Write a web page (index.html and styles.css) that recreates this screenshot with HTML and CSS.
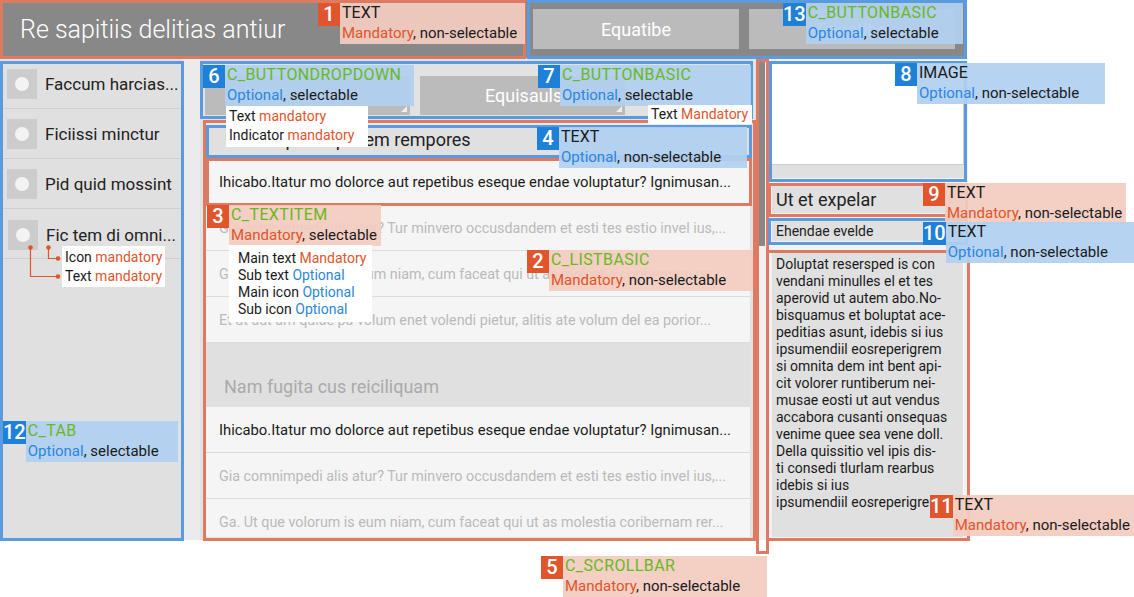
FILE: index.html
```html
<!DOCTYPE html>
<html>
<head>
<meta charset="utf-8">
<link rel="stylesheet" href="styles.css">
</head>
<body>
<div class="screen">
  <header class="hdr">
    <div class="title">Re sapitiis delitias antiur</div>
    <div class="hbtns"><div class="hbtn">Equatibe</div><div class="hbtn">Equatibe</div></div>
  </header>
  <div class="main">
    <nav class="tabs">
      <div class="tab"><span class="ticon"></span><span class="tlabel">Faccum harcias...</span></div>
      <div class="tab"><span class="ticon"></span><span class="tlabel">Ficiissi minctur</span></div>
      <div class="tab"><span class="ticon"></span><span class="tlabel">Pid quid mossint</span></div>
      <div class="tab shifted"><span class="ticon"></span><span class="tlabel">Fic tem di omni...</span></div>
    </nav>
    <div class="gap"></div>
    <section class="center">
      <div class="toolbar">
        <div class="dbtn"></div>
        <div class="dbtn">Equisauls</div>
      </div>
      <div class="list">
        <div class="lhead">Ut et expelar quidem rempores</div>
        <div class="row dark">Ihicabo.Itatur mo dolorce aut repetibus eseque endae voluptatur? Ignimusan...</div>
        <div class="row">Gia comnimpedi alis atur? Tur minvero occusdandem et esti tes estio invel ius,...</div>
        <div class="row">Ga. Ut que volorum is eum niam, cum faceat qui ut as molestia coribernam rer...</div>
        <div class="row">Et ut aut am quiae pa volum enet volendi pietur, alitis ate volum del ea porior...</div>
        <div class="group">Nam fugita cus reiciliquam</div>
        <div class="row dark">Ihicabo.Itatur mo dolorce aut repetibus eseque endae voluptatur? Ignimusan...</div>
        <div class="row">Gia comnimpedi alis atur? Tur minvero occusdandem et esti tes estio invel ius,...</div>
        <div class="row">Ga. Ut que volorum is eum niam, cum faceat qui ut as molestia coribernam rer...</div>
      </div>
    </section>
    <div class="scroll"><div class="thumb"></div></div>
    <aside class="side">
      <div class="img"><div class="pic"></div></div>
      <div class="t9">Ut et expelar</div>
      <div class="t10">Ehendae evelde</div>
      <div class="t11">Doluptat resersped is con<br>vendani minulles el et tes<br>aperovid ut autem abo.No-<br>bisquamus et boluptat ace-<br>peditias asunt, idebis si ius<br>ipsumendiil eosreperigrem<br>si omnita dem int bent api-<br>cit volorer runtiberum nei-<br>musae eosti ut aut vendus<br>accabora cusanti onsequas<br>venime quee sea vene doll.<br>Della quissitio vel ipis dis-<br>ti consedi tlurlam rearbus<br>idebis si ius<br>ipsumendiil eosreperigrem</div>
    </aside>
  </div>

  <!-- outline overlays -->
  <div class="ol orange o1"></div>
  <div class="ol blue o13"></div>
  <div class="ol blue o12"></div>
  <div class="ol blue o6"></div>
  <div class="ol orange o2"></div>
  <div class="ol blue o4"></div>
  <div class="ol orange o3"></div>
  <div class="ol orange o5"></div>
  <div class="ol blue o8"></div>
  <div class="ol orange o9"></div>
  <div class="ol blue o10"></div>
  <div class="ol orange o11"></div>

  <!-- annotation labels -->
  <div class="ann org a1"><div class="num">1</div><div class="lbl"><div class="nm">TEXT</div><div><span class="mand">Mandatory</span>, non-selectable</div></div></div>
  <div class="ann blu a13"><div class="num">13</div><div class="lbl"><div class="cn">C_BUTTONBASIC</div><div><span class="opt">Optional</span>, selectable</div></div></div>
  <div class="ann blu a6"><div class="num">6</div><div class="lbl"><div class="cn">C_BUTTONDROPDOWN</div><div><span class="opt">Optional</span>, selectable</div></div></div>
  <div class="note n6">Text <span class="mand">mandatory</span><br>Indicator <span class="mand">mandatory</span></div>
  <div class="ann blu a7"><div class="num">7</div><div class="lbl"><div class="cn">C_BUTTONBASIC</div><div><span class="opt">Optional</span>, selectable</div></div></div>
  <div class="note n7">Text <span class="mand">Mandatory</span></div>
  <div class="ann blu a4"><div class="num">4</div><div class="lbl"><div class="nm">TEXT</div><div><span class="opt">Optional</span>, non-selectable</div></div></div>
  <div class="ann org a3"><div class="num">3</div><div class="lbl"><div class="cn">C_TEXTITEM</div><div><span class="mand">Mandatory</span>, selectable</div></div></div>
  <div class="note n3">Main text <span class="mand">Mandatory</span><br>Sub text <span class="opt">Optional</span><br>Main icon <span class="opt">Optional</span><br>Sub icon <span class="opt">Optional</span></div>
  <div class="ann org a2"><div class="num">2</div><div class="lbl"><div class="cn">C_LISTBASIC</div><div><span class="mand">Mandatory</span>, non-selectable</div></div></div>
  <div class="ann org a5"><div class="num">5</div><div class="lbl"><div class="cn">C_SCROLLBAR</div><div><span class="mand">Mandatory</span>, non-selectable</div></div></div>
  <div class="ann blu a8"><div class="num">8</div><div class="lbl"><div class="nm">IMAGE</div><div><span class="opt">Optional</span>, non-selectable</div></div></div>
  <div class="ann org a9"><div class="num">9</div><div class="lbl"><div class="nm">TEXT</div><div><span class="mand">Mandatory</span>, non-selectable</div></div></div>
  <div class="ann blu a10"><div class="num">10</div><div class="lbl"><div class="nm">TEXT</div><div><span class="opt">Optional</span>, non-selectable</div></div></div>
  <div class="ann org a11"><div class="num">11</div><div class="lbl"><div class="nm">TEXT</div><div><span class="mand">Mandatory</span>, non-selectable</div></div></div>
  <div class="ann blu a12"><div class="num">12</div><div class="lbl"><div class="cn">C_TAB</div><div><span class="opt">Optional</span>, selectable</div></div></div>

  <svg class="conn" width="70" height="60" viewBox="0 0 70 60">
    <path d="M30.5 2 V31.5 H58" fill="none" stroke="#e0552b" stroke-width="1.2"/>
    <path d="M48.5 2 V13.5 H58" fill="none" stroke="#e0552b" stroke-width="1.2"/>
    <circle cx="30.5" cy="2.5" r="2.3" fill="#e0552b"/>
    <circle cx="48.5" cy="2.5" r="2.3" fill="#e0552b"/>
    <circle cx="58" cy="13.5" r="2.3" fill="#e0552b"/>
    <circle cx="58" cy="31.5" r="2.3" fill="#e0552b"/>
  </svg>
  <div class="note ntab">Icon <span class="mand">mandatory</span><br>Text <span class="mand">mandatory</span></div>
</div>
</body>
</html>
```

FILE: styles.css
```css
body {
  margin: 0;
  background: #fff;
  font-family: Roboto, "Noto Sans", sans-serif;
}
.screen {
  position: relative;
  width: 1134px;
  height: 597px;
  overflow: hidden;
  background: #fff;
}

/* header */
.hdr {
  display: flex;
  align-items: center;
  width: 966px;
  height: 58px;
  background: #888;
}
.title {
  flex: 1;
  padding-left: 20px;
  color: #fff;
  font-size: 25px;
  font-weight: 300;
}
.hbtns {
  display: flex;
  gap: 10px;
  padding-right: 11px;
}
.hbtn {
  width: 206px;
  height: 40px;
  background: #bbb;
  color: #fff;
  font-size: 18px;
  display: flex;
  align-items: center;
  justify-content: center;
}

/* main */
.main {
  display: flex;
  height: 482px;
}
.tabs {
  width: 183px;
  background: #e0e0e0;
  padding-top: 1px;
  box-sizing: border-box;
}
.tab {
  height: 49px;
  border-bottom: 1px solid #cfcfcf;
  display: flex;
  align-items: center;
  padding-left: 7px;
  gap: 8px;
}
.tab.shifted {
  padding-left: 8px;
  padding-top: 2px;
  height: 47px;
}
.ticon {
  width: 30px;
  height: 30px;
  background: #ccc;
  display: flex;
  align-items: center;
  justify-content: center;
}
.ticon::after {
  content: "";
  width: 14px;
  height: 14px;
  border-radius: 50%;
  background: #f3f3f3;
}
.tlabel {
  font-size: 17px;
  color: #222;
  white-space: nowrap;
}
.gap {
  width: 17px;
  background: #ebebeb;
}
.center {
  width: 556px;
  background: #e2e2e2;
  display: flex;
  flex-direction: column;
}
.toolbar {
  height: 65px;
  display: flex;
  gap: 10px;
  padding: 18px 0 0 5px;
  box-sizing: border-box;
}
.dbtn {
  position: relative;
  width: 205px;
  height: 39px;
  background: #bbb;
  color: #fff;
  font-size: 18px;
  display: flex;
  align-items: center;
  padding-left: 65px;
  box-sizing: border-box;
}
.dbtn::after {
  content: "";
  position: absolute;
  right: 3px;
  bottom: 3px;
  border-left: 6px solid transparent;
  border-bottom: 6px solid #eee;
}
.list {
  margin: 0 6px 3px;
  flex: 1;
  overflow: hidden;
  background: #eaeaea;
  padding-top: 3px;
}
.lhead {
  height: 31px;
  background: #e0e0e0;
  font-size: 18px;
  color: #222;
  padding: 0 0 4px 19px;
  box-sizing: border-box;
  display: flex;
  align-items: center;
  margin-bottom: 2px;
}
.row {
  height: 45px;
  border-bottom: 1px solid #dcdcdc;
  background: #f5f5f5;
  font-size: 14.3px;
  color: #bababa;
  padding-left: 13px;
  display: flex;
  align-items: center;
  white-space: nowrap;
}
.row.dark {
  color: #1a1a1a;
  font-size: 14.8px;
}
.group {
  height: 64px;
  background: #e0e0e0;
  font-size: 18px;
  color: #aaa;
  padding: 0 0 10px 18px;
  box-sizing: border-box;
  display: flex;
  align-items: flex-end;
}
.scroll {
  width: 12px;
  background: #f0f0f0;
  padding-left: 3px;
  box-sizing: border-box;
}
.thumb {
  width: 6px;
  height: 187px;
  margin-top: 1px;
  background: #888;
}
.side {
  width: 200px;
  padding: 3px 4px 0;
  box-sizing: border-box;
  display: flex;
  flex-direction: column;
  background: #f2f2f2;
}
.img {
  height: 117px;
  background: #e0e0e0;
  flex-shrink: 0;
}
.pic {
  height: 103px;
  background: #fff;
  border-right: 1px solid #ccc;
  border-bottom: 1px solid #ccc;
}
.t9 {
  margin-top: 8px;
  height: 27px;
  background: #e0e0e0;
  font-size: 18px;
  color: #222;
  padding-left: 4px;
  display: flex;
  align-items: center;
  flex-shrink: 0;
}
.t10 {
  margin-top: 8px;
  height: 20px;
  background: #e0e0e0;
  font-size: 14px;
  color: #222;
  padding-left: 4px;
  display: flex;
  align-items: center;
  flex-shrink: 0;
}
.t11 {
  margin-top: 12px;
  height: 284px;
  background: #e0e0e0;
  font-size: 14px;
  line-height: 17px;
  color: #1a1a1a;
  padding: 3px 4px;
  box-sizing: border-box;
  border-right: 1px solid #fff;
  white-space: nowrap;
  overflow: hidden;
}

/* outline overlays */
.ol {
  position: absolute;
  box-sizing: border-box;
  border: 3px solid;
}
.orange { border-color: #de7a62; }
.blue { border-color: #5a9be0; }
.o1 { left: 0; top: 0; width: 526px; height: 59px; }
.o13 { left: 527px; top: 0; width: 440px; height: 59px; }
.o12 { left: 0; top: 61px; width: 184px; height: 480px; }
.o6 { left: 200px; top: 61px; width: 553px; height: 58px; }
.o2 { left: 203px; top: 120px; width: 553px; height: 421px; }
.o4 { left: 206px; top: 125px; width: 546px; height: 33px; }
.o3 { left: 206px; top: 158px; width: 546px; height: 48px; }
.o5 { left: 756px; top: 59px; width: 13px; height: 495px; }
.o8 { left: 769px; top: 61px; width: 198px; height: 121px; }
.o9 { left: 768px; top: 183px; width: 200px; height: 34px; }
.o10 { left: 768px; top: 218px; width: 200px; height: 27px; }
.o11 { left: 766px; top: 250px; width: 204px; height: 291px; }

/* annotation labels */
.ann {
  position: absolute;
  display: flex;
  align-items: flex-start;
  font-size: 15px;
  line-height: 20px;
  color: #1a1a1a;
}
.num {
  min-width: 22px;
  height: 23px;
  color: #fff;
  font-size: 20px;
  line-height: 23px;
  text-align: center;
  font-weight: 500;
}
.org .num { background: #e0552b; }
.blu .num { background: #1f80d8; }
.lbl {
  padding: 0 4px 1px 2px;
  box-sizing: border-box;
  white-space: nowrap;
}
.org .lbl { background: rgba(242, 203, 192, 0.93); }
.blu .lbl { background: rgba(176, 208, 240, 0.93); }
.cn {
  color: #6ab81d;
  font-size: 16px;
  letter-spacing: 0.4px;
}
.nm { font-size: 16px; }
.mand { color: #e0552b; }
.opt { color: #2b86e0; }

.a1 { left: 318px; top: 3px; }
.a1 .lbl { width: 185px; }
.a13 { left: 783px; top: 3px; }
.a13 .lbl { width: 157px; }
.a6 { left: 203px; top: 65px; }
.a6 .lbl { width: 189px; }
.a7 { left: 538px; top: 65px; }
.a7 .lbl { width: 191px; }
.a4 { left: 537px; top: 127px; }
.a4 .lbl { width: 188px; }
.a3 { left: 207px; top: 205px; }
.a3 .lbl { width: 152px; }
.a2 { left: 527px; top: 250px; }
.a2 .lbl { width: 204px; }
.a5 { left: 541px; top: 556px; }
.a5 .lbl { width: 204px; }
.a8 { left: 895px; top: 63px; }
.a8 .lbl { width: 188px; }
.a9 { left: 923px; top: 183px; }
.a9 .lbl { width: 181px; }
.a10 { left: 923px; top: 222px; }
.a10 .lbl { width: 189px; }
.a11 { left: 930px; top: 495px; }
.a11 .lbl { width: 182px; }
.a12 { left: 3px; top: 421px; }
.a12 .lbl { width: 152px; }

.note {
  position: absolute;
  background: #fff;
  font-size: 14px;
  line-height: 19px;
  color: #1a1a1a;
  padding: 0 3px;
  box-sizing: border-box;
  white-space: nowrap;
}
.n6 { left: 226px; top: 106px; width: 142px; height: 41px; padding-top: 1px; }
.n7 { left: 648px; top: 105px; width: 104px; height: 19px; }
.n3 { left: 229px; top: 245px; width: 143px; height: 77px; padding: 5px 0 0 9px; line-height: 17px; }
.ntab { left: 62px; top: 246px; width: 103px; height: 41px; padding-top: 2px; }
.conn {
  position: absolute;
  left: 0;
  top: 245px;
}
```
